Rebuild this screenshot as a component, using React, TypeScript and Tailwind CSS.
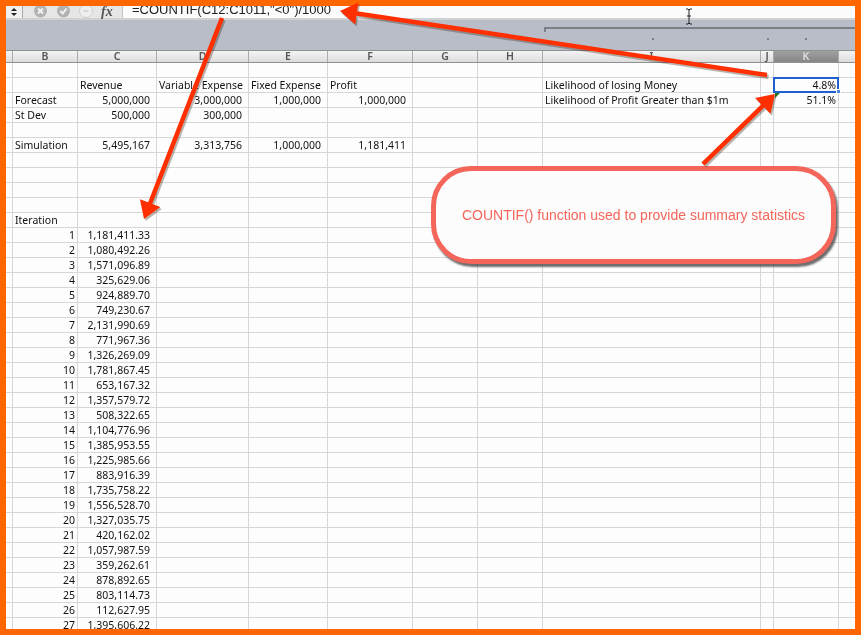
const COLS = "grid grid-cols-[7px_65px_79px_92px_79px_85px_65px_65px_218px_13px_65px_1fr]";
const LETTERS = ["", "B", "C", "D", "E", "F", "G", "H", "I", "J", "K", ""];

const rows: Record<number, string[]> = {
  1: ["", "", "Revenue", "Variable Expense", "Fixed Expense", "Profit", "", "", "Likelihood of losing Money", "", ""],
  2: ["", "Forecast", "5,000,000", "3,000,000", "1,000,000", "1,000,000", "", "", "Likelihood of Profit Greater than $1m", "", "51.1%"],
  3: ["", "St Dev", "500,000", "300,000"],
  5: ["", "Simulation", "5,495,167", "3,313,756", "1,000,000", "1,181,411"],
  10: ["", "Iteration"],
};

const VALUES = [
  "1,181,411.33", "1,080,492.26", "1,571,096.89", "325,629.06", "924,889.70", "749,230.67", "2,131,990.69",
  "771,967.36", "1,326,269.09", "1,781,867.45", "653,167.32", "1,357,579.72", "508,322.65", "1,104,776.96",
  "1,385,953.55", "1,225,985.66", "883,916.39", "1,735,758.22", "1,556,528.70", "1,327,035.75", "420,162.02",
  "1,057,987.59", "359,262.61", "878,892.65", "803,114.73", "112,627.95", "1,395,606.22",
];

const LEFT_TEXT = new Set([1, 8]);
const WIDE_PAD = new Set([2, 3, 4, 5]);

function Row({ cells, header }: { cells: string[]; header?: boolean }) {
  return (
    <div className={`${COLS} h-[15px] shrink-0`}>
      {Array.from({ length: 12 }).map((_, i) => {
        const text = cells[i] ?? "";
        const left = LEFT_TEXT.has(i) && !/^\d+$/.test(text);
        const isHeaderLabel = header && i >= 2 && i <= 5;
        return (
          <div
            key={i}
            className={`h-[15px] border-b border-[#d6d7d8] ${i < 11 ? "border-r" : ""} leading-[15px] whitespace-nowrap overflow-visible pl-[2px] ${
              WIDE_PAD.has(i) && !isHeaderLabel ? "pr-[6px]" : "pr-[2px]"
            } text-[#111111] ${left || isHeaderLabel ? "text-left" : "text-right"}`}
          >
            {text}
          </div>
        );
      })}
    </div>
  );
}

function Arrow({ x1, y1, x2, y2, w = 4.5, head = 17, spread = 11 }: { x1: number; y1: number; x2: number; y2: number; w?: number; head?: number; spread?: number }) {
  const dx = x2 - x1;
  const dy = y2 - y1;
  const len = Math.hypot(dx, dy);
  const ux = dx / len;
  const uy = dy / len;
  const bx = x2 - ux * head;
  const by = y2 - uy * head;
  const px = -uy;
  const py = ux;
  const pts = [
    [x1 + px * w * 0.5, y1 + py * w * 0.5],
    [bx + px * w * 0.5, by + py * w * 0.5],
    [bx + px * spread, by + py * spread],
    [x2, y2],
    [bx - px * spread, by - py * spread],
    [bx - px * w * 0.5, by - py * w * 0.5],
    [x1 - px * w * 0.5, y1 - py * w * 0.5],
  ]
    .map((p) => p.map((v) => v.toFixed(1)).join(","))
    .join(" ");
  return (
    <g>
      <polygon points={pts} fill="#3a2a20" opacity="0.35" transform="translate(1.5 2)" />
      <polygon points={pts} fill="#ff2f00" />
    </g>
  );
}

export default function App() {
  return (
    <div className="relative w-[861px] h-[635px] overflow-hidden bg-[#ff6600] p-[6px] font-['Noto_Sans','Liberation_Sans',sans-serif] text-[10.5px] blur-[0.3px]">
      <div className="relative w-[849px] h-[623px] overflow-hidden bg-[#fdfdfd] flex flex-col">
        {/* formula bar */}
        <div className="h-[14px] shrink-0 flex items-start bg-[#fbfbfb] border-b-2 border-[#d0d1d3]">
          <div className="w-[117px] h-[12px] shrink-0 flex items-center bg-[#e6e6e6] border-r border-[#c4c4c4]">
            <div className="w-[17px] flex flex-col items-center gap-[2px] border-r border-[#aaa] h-full justify-center bg-[#f0f0f0]">
              <span className="w-0 h-0 border-x-[3px] border-x-transparent border-b-[3px] border-b-[#222]" />
              <span className="w-0 h-0 border-x-[3px] border-x-transparent border-t-[3px] border-t-[#222]" />
            </div>
            <svg className="ml-[11px] shrink-0" width="13" height="12" viewBox="0 0 13 12">
              <circle cx="6.5" cy="5" r="6.5" fill="#b2b2b2" />
              <path d="M4 2.5l5 5M9 2.5l-5 5" stroke="#f2f2f2" strokeWidth="2" />
            </svg>
            <svg className="ml-[10px] shrink-0" width="13" height="12" viewBox="0 0 13 12">
              <circle cx="6.5" cy="5" r="6.5" fill="#b2b2b2" />
              <path d="M3.5 5l2.2 2.5L9.5 2.5" fill="none" stroke="#f2f2f2" strokeWidth="2" />
            </svg>
            <svg className="ml-[9px] shrink-0" width="14" height="12" viewBox="0 0 14 12">
              <circle cx="7" cy="5" r="6.5" fill="#efefef" stroke="#cfcfcf" />
              <path d="M4.5 5h5" stroke="#d6d6d6" strokeWidth="2" />
            </svg>
            <span className="ml-[8px] font-['Liberation_Serif',serif] italic font-bold text-[14px] leading-[12px] text-[#555]">fx</span>
          </div>
          <div className="pl-[9px] font-['Liberation_Sans',sans-serif] text-[13px] leading-[14px] -mt-[3px] text-[#222] whitespace-nowrap">
            =COUNTIF(C12:C1011,"&lt;0")/1000
          </div>
        </div>

        {/* ribbon band */}
        <div className="relative h-[30px] shrink-0 bg-[#b9bdc7]">
          <div className="absolute left-[538px] top-[7px] right-0 h-[5px] border-l-2 border-t-2 border-[#7d7f85]" />
          <span className="absolute left-[646px] top-[18px] w-[2px] h-[2px] bg-[#7d7f85]" />
          <span className="absolute left-[761px] top-[18px] w-[2px] h-[2px] bg-[#7d7f85]" />
          <span className="absolute left-[799px] top-[18px] w-[2px] h-[2px] bg-[#7d7f85]" />
        </div>

        {/* column headers */}
        <div className={`${COLS} h-[13px] shrink-0 border-y border-[#8f9094] bg-gradient-to-b from-[#f4f4f4] to-[#dcdcdc]`}>
          {LETTERS.map((l, i) => (
            <div
              key={i}
              className={`text-center leading-[11px] font-semibold text-[#555] ${i < 11 ? "border-r border-[#a9aaad]" : ""} ${
                l === "K" ? "bg-gradient-to-b from-[#a0a0a0] to-[#868686] text-[#ddd]" : ""
              }`}
            >
              {l}
            </div>
          ))}
        </div>

        {/* sheet */}
        <div className="flex flex-col">
          {Array.from({ length: 38 }).map((_, r) => {
            const v = r - 10;
            const cells =
              r >= 11 && v <= VALUES.length
                ? ["", String(v), VALUES[v - 1]]
                : rows[r] ?? [];
            return <Row key={r} cells={cells} header={r === 1} />;
          })}
        </div>

        {/* selected cell */}
        <div className="absolute left-[767px] top-[71px] w-[66px] h-[16px] border-2 border-[#1f5fd0] text-right pr-[1px] leading-[13px] text-[#111111]">
          4.8%
          <span className="absolute -right-[4px] -bottom-[3px] w-[5px] h-[5px] bg-[#4d86e0] border border-white" />
        </div>
        {/* green error corner */}
        <span className="absolute left-[769px] top-[87px] w-0 h-0 border-t-[5px] border-t-[#1f7a1f] border-r-[5px] border-r-transparent" />
      </div>

      {/* callout */}
      <div className="absolute left-[431px] top-[166px] w-[405px] h-[98px] rounded-[40px] border-[5px] border-[#f4655a] bg-[#fcfcfc] shadow-[2px_3px_2px_rgba(60,60,60,0.75)] flex items-center justify-center font-['Liberation_Sans',sans-serif] text-[14px] text-[#f4655a]">
        COUNTIF() function used to provide summary statistics
      </div>

      {/* arrows */}
      <svg className="absolute inset-0 pointer-events-none" width="861" height="635" viewBox="0 0 861 635">
        <Arrow x1={767} y1={75} x2={340} y2={11} />
        <Arrow x1={222} y1={18} x2={144} y2={219} />
        <Arrow x1={703} y1={164} x2={775} y2={94} />
      </svg>

      {/* I-beam cursor */}
      <svg className="absolute left-[684px] top-[8px]" width="10" height="17" viewBox="0 0 10 17">
        <path d="M2 1h2l1 1 1-1h2M5 2v13M2 16h2l1-1 1 1h2M3 8h4" fill="none" stroke="#222" strokeWidth="1" />
      </svg>
    </div>
  );
}
